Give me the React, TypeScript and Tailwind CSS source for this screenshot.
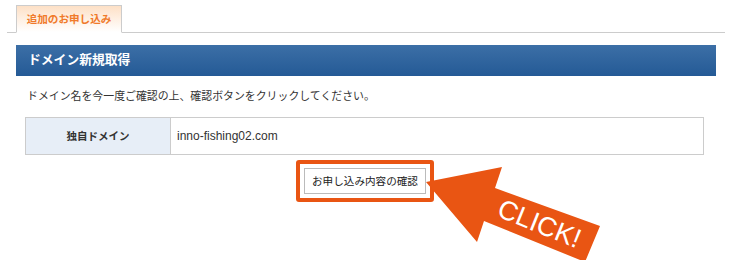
import React from "react";

const jp = '"Liberation Sans", "Noto Sans CJK JP", sans-serif';

export default function App() {
  return (
    <div
      className="relative w-[732px] h-[260px] overflow-hidden bg-white text-[#333]"
      style={{ fontFamily: jp }}
    >
      {/* Tab bar */}
      <div className="mx-[7px] pt-[5px] border-b border-[#cccccc] flex">
        <div className="ml-[9px] -mb-px h-[28px] w-[106px] flex items-center justify-center border border-[#cccccc] border-b-white bg-gradient-to-b from-[#fde0c6] to-white">
          <span className="text-[10.6px] font-bold text-[#f07a2a] leading-none">追加のお申し込み</span>
        </div>
      </div>

      <div className="mx-[16px] mt-[12px]">
        {/* Header */}
        <div className="h-[31px] flex items-center pl-[12px] bg-gradient-to-b from-[#3c6fa6] to-[#245a96]">
          <span className="text-white font-bold text-[12.8px] leading-none">ドメイン新規取得</span>
        </div>

        {/* Instruction */}
        <div className="mt-[15px] ml-[11px] text-[10.9px] leading-none text-[#333]">
          ドメイン名を今一度ご確認の上、確認ボタンをクリックしてください。
        </div>

        {/* Table */}
        <div className="mt-[15px] ml-[9px] w-[679px] h-[38px] flex border border-[#cccccc]">
          <div className="w-[145px] bg-[#e7eef7] border-r border-[#cccccc] flex items-center justify-center">
            <span className="text-[10.5px] font-bold leading-none">独自ドメイン</span>
          </div>
          <div className="flex items-center pl-[6px]">
            <span className="text-[12px] leading-none" style={{ fontFamily: '"Liberation Sans", sans-serif' }}>
              inno-fishing02.com
            </span>
          </div>
        </div>

        {/* Button */}
        <div className="mt-[5px] flex justify-center">
          <div className="ml-[-2px] border-[4px] border-[#e95513] rounded-[3px] p-[4px] bg-white">
            <div className="w-[122px] h-[26px] border border-[#bbbbbb] bg-white flex items-center justify-center">
              <span className="text-[10.6px] leading-none text-[#222]">お申し込み内容の確認</span>
            </div>
          </div>
        </div>
      </div>

      {/* CLICK arrow overlay */}
      <svg
        className="absolute left-0 top-0"
        width="732"
        height="260"
        viewBox="0 0 732 260"
      >
        <polygon
          points="426,182 502,167 495,188 600,226 585,262 484,221 477,242"
          fill="#e95513"
        />
        <text
          x="0"
          y="0"
          fill="#ffffff"
          fontSize="27"
          fontFamily='"Liberation Sans", Arial, sans-serif'
          textAnchor="middle"
          transform="translate(536,232) rotate(22)"
        >
          CLICK!
        </text>
      </svg>
    </div>
  );
}
